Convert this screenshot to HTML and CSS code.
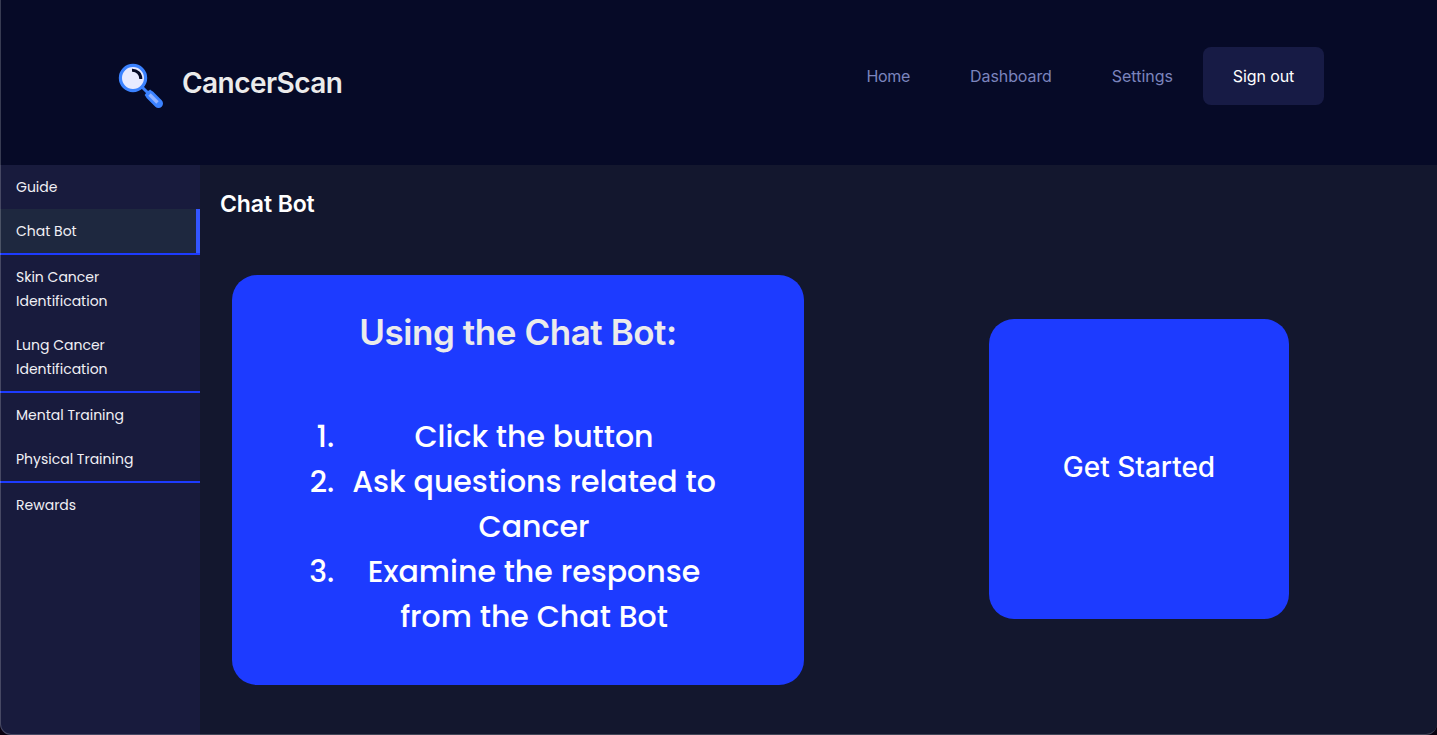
FILE: index.html
```html
<!DOCTYPE html>
<html lang="en">
<head>
    <meta charset="UTF-8">
    <meta name="viewport" content="width=device-width, initial-scale=1.0">
    <title>CancerScan</title>
    <link rel="stylesheet" href="styles.css">
</head>
<body>
    <header class="header">
        <a class="logo" href="#">
            <svg width="46" height="46" viewBox="0 0 46 46" fill="none">
                <path d="M24 24L31 31" stroke="#3b82ff" stroke-width="3"/>
                <path d="M32 32L40.500 40.500" stroke="#3b82ff" stroke-width="9" stroke-linecap="round"/>
                <path d="M27.500 33L33 27.500" stroke="#3b82ff" stroke-width="2.500"/>
                <path d="M31.500 31.500L39.500 39.500" stroke="#93b4ff" stroke-width="3.400"/>
                <circle cx="15" cy="15" r="12.600" fill="#e8eaff" stroke="#3b82ff" stroke-width="3.200"/>
                <path d="M14 7.200A8.500 8.500 0 0 1 22.800 16" stroke="#060a25" stroke-width="3"/>
            </svg>
            <span>CancerScan</span>
        </a>
        <nav class="nav">
            <a class="home" href="#">Home</a>
            <a class="dash" href="#">Dashboard</a>
            <a class="settings" href="#">Settings</a>
            <a class="signout" href="#">Sign out</a>
        </nav>
    </header>

    <div class="page">
        <aside class="sidebar">
            <a href="#">Guide</a>
            <a class="active" href="#">Chat Bot</a>
            <hr>
            <a href="#">Skin Cancer<br>Identification</a>
            <a href="#">Lung Cancer<br>Identification</a>
            <hr>
            <a href="#">Mental Training</a>
            <a href="#">Physical Training</a>
            <hr>
            <a href="#">Rewards</a>
        </aside>
        <main class="content">
            <h1>Chat Bot</h1>
            <div class="row">
                <section class="card">
                    <h2>Using the Chat Bot:</h2>
                    <ol>
                        <li>Click the button</li>
                        <li>Ask questions related to Cancer</li>
                        <li>Examine the response from the Chat Bot</li>
                    </ol>
                </section>
                <button class="start">Get Started</button>
            </div>
        </main>
    </div>
</body>
</html>
```
FILE: styles.css
```css
*{
    box-sizing: border-box;
}
body{
    margin: 0;
    height: 100vh;
    overflow: hidden;
    background-color: #13172e;
    color: white;
    font-family: Poppins, Inter, sans-serif;
}
/* thin window edge */
body::after{
    content: "";
    position: fixed;
    top: -20px;
    right: 0;
    bottom: 0;
    left: 0;
    border: 1px solid rgba(255,255,255,0.2);
    border-right: 0;
    border-radius: 11px;
    box-shadow: 0 0 0 12px #08000f;
    pointer-events: none;
}
a{
    color: inherit;
    text-decoration: none;
}
.header{
    height: 165px;
    padding: 0 113px 0 118px;
    display: flex;
    justify-content: space-between;
    background-color: #060a27;
    font-family: Inter, sans-serif;
}
.logo{
    display: flex;
    align-items: center;
    gap: 18px;
    height: 46px;
    margin-top: 63px;
    font-size: 28px;
    font-weight: 600;
    letter-spacing: -0.55px;
    line-height: 40px;
    color: #ebebeb;
}
.logo span{
    margin-top: -6px;
}
.nav{
    display: flex;
    height: 58px;
    margin-top: 47px;
    font-size: 16px;
    letter-spacing: -0.1px;
    line-height: 58px;
    color: #7b84bd;
}
.nav a{
    margin-right: 60px;
}
.nav .home{
    letter-spacing: -0.3px;
}
.nav .settings{
    margin-right: 30px;
    letter-spacing: 0;
}
.nav .signout{
    width: 121px;
    margin-right: 0;
    border-radius: 8px;
    background-color: #171b45;
    color: white;
    text-align: center;
}
.page{
    display: flex;
    height: calc(100vh - 165px);
}
.sidebar{
    width: 200px;
    flex-shrink: 0;
    background-color: #181b3d;
    font-size: 14px;
    line-height: 24px;
}
.sidebar a{
    display: block;
    padding: 10px 16px;
    color: #f0f0f5;
}
.sidebar .active{
    background-color: #1e283f;
    border-right: 4px solid #3355ff;
}
.sidebar hr{
    height: 2px;
    margin: 0;
    border: 0;
    background-color: #1d3bff;
}
.content{
    flex: 1;
    padding: 21px 20px 0;
}
h1{
    margin: 0;
    font-family: Inter, sans-serif;
    font-size: 23px;
    font-weight: 600;
    letter-spacing: -0.1px;
    line-height: 36px;
}
.row{
    display: flex;
    align-items: center;
    justify-content: space-between;
    margin: 53px 128px 0 12px;
}
.card{
    width: 572px;
    height: 410px;
    padding: 32px 80px 0 72px;
    border-radius: 25px;
    background-color: #1d3bff;
    text-align: center;
}
.card h2{
    margin: 0 -8px 0 0;
    font-family: Inter, sans-serif;
    font-size: 35px;
    font-weight: 600;
    letter-spacing: -0.45px;
    line-height: 50px;
    color: #ebebeb;
}
.card ol{
    margin: 57px 0 0;
    padding-left: 38px;
    font-size: 30px;
    font-weight: 500;
    line-height: 45px;
}
.card li{
    padding-left: 2px;
}
.start{
    width: 300px;
    height: 300px;
    margin-bottom: 22px;
    padding: 0 0 4px;
    border: 0;
    border-radius: 25px;
    background-color: #1d3bff;
    color: white;
    font-family: Inter, sans-serif;
    font-size: 28px;
    font-weight: 500;
}
```
